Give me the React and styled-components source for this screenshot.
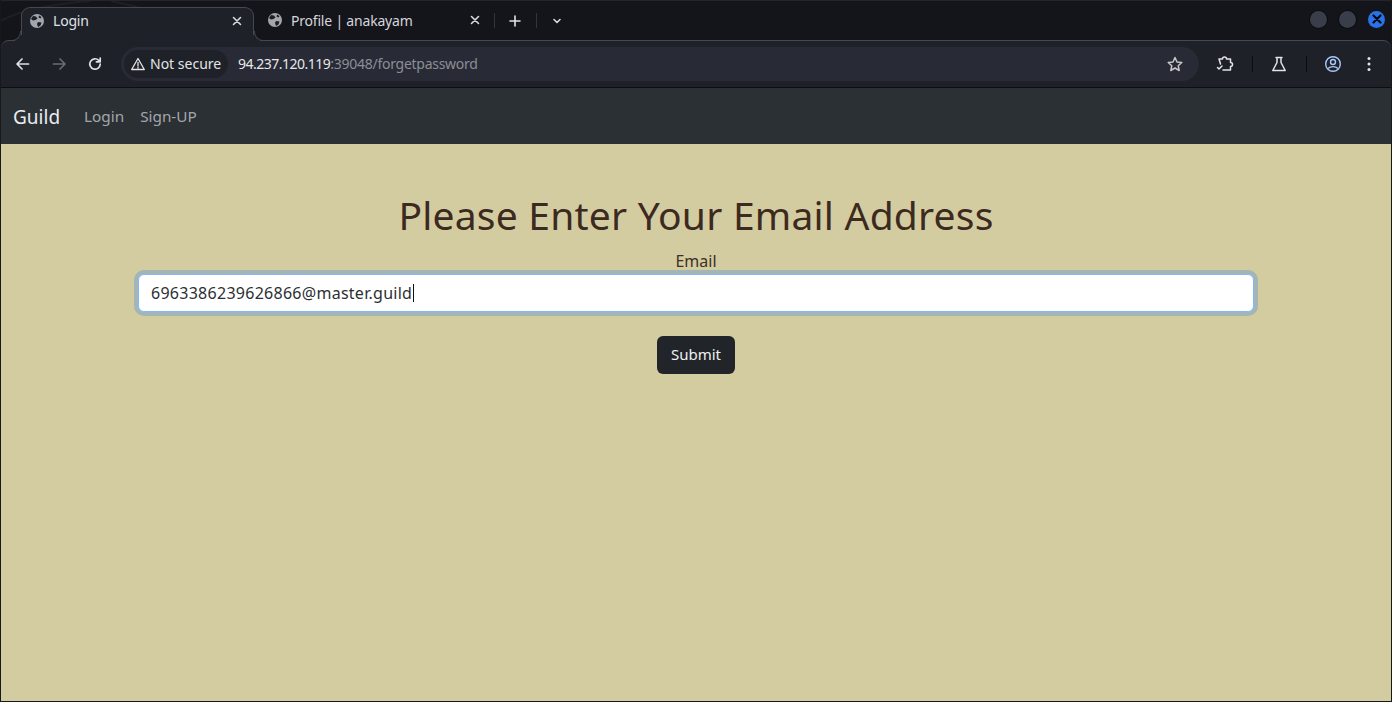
import React from "react";
import styled, { createGlobalStyle } from "styled-components";

const Global = createGlobalStyle`
  html, body { margin: 0; padding: 0; height: 100%; background: #d4cca1; overflow: hidden; }
  #root { height: 702px; }
  * { box-sizing: border-box; }
`;

const Frame = styled.div`
  width: 1392px; height: 702px; display: flex; flex-direction: column; background: #14151a;
  border-left: 1px solid #17181c; border-right: 1px solid #17181c; border-bottom: 1px solid #17181c;
  font-family: "Noto Sans", sans-serif;
`;
const TabStrip = styled.div`
  height: 40px; flex: none; display: flex; align-items: flex-end;
  padding-left: 20px; position: relative; z-index: 2; border-top: 1px solid #24252b;
`;
const Streak = styled.svg` position: absolute; left: 0; top: 0; pointer-events: none; `;
const Tab = styled.div`
  width: ${p => p.$w}px; height: ${p => p.$active ? 34 : 33}px; flex: none; display: flex; align-items: center;
  padding-left: ${p => p.$active ? 7 : 13}px; padding-bottom: ${p => p.$active ? 8 : 7}px; position: relative;
  color: ${p => p.$active ? "#dfe1e6" : "#d4d6db"};
  font-size: 14px; letter-spacing: -0.2px; margin-bottom: ${p => p.$active ? -1 : 0}px;
  background: ${p => p.$active ? "#1f2128" : "transparent"};
  border: ${p => p.$active ? "1px solid #47484f" : "none"};
  border-bottom: none; border-radius: 9px 9px 0 0;
  ${p => p.$active && `
    &::before, &::after {
      content: ""; position: absolute; bottom: 0; width: 9px; height: 9px; background: transparent;
      border-bottom: 1px solid #47484f;
    }
    &::before {
      right: 100%; margin-right: 1px; border-right: 1px solid #47484f; border-radius: 0 0 9px 0;
      box-shadow: 4px 4px 0 #1f2128;
    }
    &::after {
      left: 100%; margin-left: 1px; border-left: 1px solid #47484f; border-radius: 0 0 0 9px;
      box-shadow: -4px 4px 0 #1f2128;
    }
  `}
`;
const TabTitle = styled.span` margin-left: 8px; flex: 1; white-space: nowrap; `;
const TabClose = styled.span` display: flex; margin-right: ${p => p.$mr}px; `;
const Strip = styled.span` width: 1px; height: 15px; background: #33343a; margin: 0 ${p => p.$r}px 0 ${p => p.$l}px; align-self: center; flex: none; `;
const StripButton = styled.span` display: flex; flex: none; align-self: center; `;
const WindowButtons = styled.div` margin-left: auto; margin-right: 6px; margin-bottom: 3px; align-self: center; display: flex; gap: 12px; `;
const WindowDot = styled.span`
  width: 17px; height: 17px; border-radius: 50%; background: ${p => p.$blue ? "#2a72e8" : "#3a3e4b"};
  box-shadow: ${p => p.$blue ? "none" : "0 0 0 1px #0c0d10"};
  display: flex; align-items: center; justify-content: center;
`;
const Toolbar = styled.div`
  height: 48px; flex: none; background: #1f2128; display: flex; align-items: center; padding-left: 13px;
  border-top: 1px solid #47484f; border-bottom: 1px solid #0d0e11; border-radius: 8px 8px 0 0;
`;
const NavIcon = styled.span` display: flex; width: 18px; height: 18px; margin-right: ${p => p.$mr || 0}px; flex: none; `;
const Omnibox = styled.div`
  width: 1078px; height: 34px; border-radius: 17px; background: #282a35; display: flex; align-items: center;
  padding-left: 3px; flex: none; margin-right: 17px;
`;
const Chip = styled.div`
  height: 28px; width: 104px; border-radius: 14px; background: #1f2128; display: flex; align-items: center;
  padding-left: 6px; color: #e3e4e8; font-size: 14px; gap: 4px; flex: none; white-space: nowrap;
`;
const ChipText = styled.span` margin-bottom: 2px; `;
const Url = styled.span` margin-left: 10px; margin-bottom: 2px; font-size: 14px; letter-spacing: -0.5px; color: #e6e7ea; white-space: nowrap; `;
const UrlRest = styled.span` color: #8c8e95; letter-spacing: -0.27px; `;
const Star = styled.span` margin-left: auto; margin-right: 15px; display: flex; `;
const ToolSep = styled.span` width: 1px; height: 16px; background: #0b0c0f; flex: none; margin: 0 ${p => p.$r}px 0 ${p => p.$l}px; `;
const ToolIcon = styled.span` display: flex; flex: none; width: 18px; height: 18px; margin-left: ${p => p.$ml || 0}px; `;

const Navbar = styled.nav`
  height: 56px; flex: none; background: #2b3035; display: flex; align-items: center; padding-left: 12px;
`;
const Brand = styled.a` font-size: 19px; color: #e9ecef; margin-right: 16px; padding-top: 1px; `;
const NavLink = styled.a` font-size: 15.3px; color: #a4a7aa; padding: 0 8px; `;

const Page = styled.main` flex: 1; background: #d4cca1; color: #3a2a1e; `;
const Container = styled.div` width: 1140px; margin: 0 auto; padding: 0 12px; display: flex; flex-direction: column; align-items: center; `;
const Heading = styled.h1`
  margin: 47px 0 0; font-size: 39px; line-height: 48px; font-weight: 400; letter-spacing: 0.22px; font-family: "Noto Sans", sans-serif;
  color: #3c2a20; white-space: nowrap;
`;
const Label = styled.label` margin-top: 10px; font-size: 16px; line-height: 24px; color: #3c2f26; height: 23px; display: block; `;
const InputBox = styled.div`
  width: 1116px; height: 38px; background: #fff; border: 1px solid #86b7fe; border-radius: 6px; box-shadow: 0 0 0 4px rgba(13,110,253,.25);
  margin-top: 2px; display: flex; align-items: center; padding-left: 12px; font-size: 16px; color: #2c2f33; letter-spacing: .27px;
`;
const Caret = styled.span` width: 1px; height: 18px; background: #111; margin-left: 1px; `;
const Submit = styled.button`
  margin-top: 24px; width: 78px; height: 38px; border: none; border-radius: 6px; background: #212529; color: #f0f0f0;
  font: 15px "Noto Sans", sans-serif; padding: 0 0 2px;
`;

const s = { fill: "none", strokeLinecap: "round", strokeLinejoin: "round" };
const Globe = () => (
  <svg width="16" height="16" viewBox="0 0 16 16">
    <circle cx="8" cy="8" r="7" fill="#a3a6ad" />
    <path d="M4 3l3 .5 1.500 2-2 1.500-2.500.5L2 6zM9 9l3.500.5-1 3-2.500 1.500-1-3zM10 2.500l2.500 1.500-1 1.500-2-1z" fill="#1c1e24" />
  </svg>
);
const X = ({ c = "#d8dade", w = 1.6 }) => (
  <svg width="10" height="10" viewBox="0 0 10 10"><path d="M1.500 1.500l7 7M8.500 1.500l-7 7" stroke={c} strokeWidth={w} {...s} /></svg>
);

export default function App() {
  return (
    <Frame>
      <Global />
      <TabStrip>
        <Streak width="170" height="24" viewBox="0 0 170 24">
          <path d="M0 20C20 8 60 2 90 0M110 0c15 3 30 7 50 12" stroke="#1e1f25" strokeWidth="2" fill="none" />
        </Streak>
        <Tab $active $w={233}>
          <Globe /><TabTitle>Login</TabTitle><TabClose $mr={11}><X /></TabClose>
        </Tab>
        <Tab $w={235}>
          <Globe /><TabTitle>Profile | anakayam</TabTitle><TabClose $mr={9}><X /></TabClose>
        </Tab>
        <Strip $l={5} $r={14} />
        <StripButton>
          <svg width="12" height="12" viewBox="0 0 12 12"><path d="M6 1v10M1 6h10" stroke="#e0e2e6" strokeWidth="1.600" {...s} /></svg>
        </StripButton>
        <Strip $l={15} $r={15} />
        <StripButton>
          <svg width="10" height="10" viewBox="0 0 10 10"><path d="M2 3.500L5 6.500 8 3.500" stroke="#d8dade" strokeWidth="1.600" {...s} /></svg>
        </StripButton>
        <WindowButtons>
          <WindowDot /><WindowDot />
          <WindowDot $blue><X c="#06090f" w={2.2} /></WindowDot>
        </WindowButtons>
      </TabStrip>
      <Toolbar>
        <NavIcon $mr={18}>
          <svg width="18" height="18" viewBox="0 0 18 18"><path d="M14.500 9h-11M8 4L3 9l5 5" stroke="#dfe1e6" strokeWidth="1.700" {...s} /></svg>
        </NavIcon>
        <NavIcon $mr={18}>
          <svg width="18" height="18" viewBox="0 0 18 18"><path d="M3.500 9h11M10 4l5 5-5 5" stroke="#696b72" strokeWidth="1.700" {...s} /></svg>
        </NavIcon>
        <NavIcon $mr={17}>
          <svg width="18" height="18" viewBox="0 0 18 18"><path d="M14.200 9a5.200 5.200 0 1 1-1.500-3.700L14.200 6.800M14.200 3v3.800h-3.800" stroke="#dfe1e6" strokeWidth="1.700" {...s} /></svg>
        </NavIcon>
        <Omnibox>
          <Chip>
            <svg width="16" height="16" viewBox="0 0 16 16"><path d="M8 2.500L14.300 13.500H1.700zM8 6.500v3.500M8 11.400v.6" stroke="#e3e4e8" strokeWidth="1.300" {...s} /></svg>
            <ChipText>Not secure</ChipText>
          </Chip>
          <Url>94.237.120.119<UrlRest>:39048/forgetpassword</UrlRest></Url>
          <Star>
            <svg width="18" height="18" viewBox="0 0 18 18"><path d="M9 2.500l2 4.500 4.800.5-3.600 3.200 1 4.800L9 13l-4.200 2.500 1-4.800L2.200 7.500 7 7z" stroke="#c4c6cb" strokeWidth="1.500" {...s} /></svg>
          </Star>
        </Omnibox>
        <ToolIcon>
          <svg width="18" height="18" viewBox="0 0 18 18"><path d="M3 4H6.500a2 2 0 0 1 4 0h4v3.500a2 2 0 0 1 0 4V15H7M3 4L4.500 9M1.500 12.500l1.500 1.500 3-3" stroke="#e2e4e8" strokeWidth="1.500" {...s} /></svg>
        </ToolIcon>
        <ToolSep $l={18} $r={17} />
        <ToolIcon>
          <svg width="18" height="18" viewBox="0 0 18 18"><path d="M6 2.500h6M7 2.500v5L2.800 15.500h12.400L11 7.500v-5" stroke="#e2e4e8" strokeWidth="1.500" {...s} /></svg>
        </ToolIcon>
        <ToolSep $l={18} $r={17} />
        <ToolIcon>
          <svg width="18" height="18" viewBox="0 0 18 18"><circle cx="9" cy="9" r="7.300" stroke="#a8c7fa" strokeWidth="1.400" fill="none" /><circle cx="9" cy="7" r="2.500" stroke="#a8c7fa" strokeWidth="1.400" fill="none" /><path d="M4 13.500c2.500-2.500 7.500-2.500 10 0" stroke="#a8c7fa" strokeWidth="1.400" fill="none" /></svg>
        </ToolIcon>
        <ToolIcon $ml={18}>
          <svg width="18" height="18" viewBox="0 0 18 18"><circle cx="9" cy="3.500" r="1.500" fill="#e2e4e8" /><circle cx="9" cy="9" r="1.500" fill="#e2e4e8" /><circle cx="9" cy="14.500" r="1.500" fill="#e2e4e8" /></svg>
        </ToolIcon>
      </Toolbar>
      <Navbar>
        <Brand>Guild</Brand>
        <NavLink>Login</NavLink>
        <NavLink>Sign-UP</NavLink>
      </Navbar>
      <Page>
        <Container>
          <Heading>Please Enter Your Email Address</Heading>
          <Label>Email</Label>
          <InputBox>6963386239626866@master.guild<Caret /></InputBox>
          <Submit>Submit</Submit>
        </Container>
      </Page>
    </Frame>
  );
}
